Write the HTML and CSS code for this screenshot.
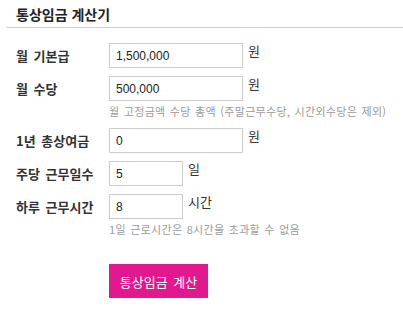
FILE: index.html
```html
<!DOCTYPE html>
<html lang="ko">
<head>
<meta charset="utf-8">
<title>통상임금 계산기</title>
<link rel="stylesheet" href="styles.css">
</head>
<body>
<div class="calc">
  <h1 class="title">통상임금 계산기</h1>
  <form class="form">
    <div class="row">
      <label class="label">월 기본급</label>
      <input class="field wide" type="text" value="1,500,000">
      <span class="unit">원</span>
    </div>
    <div class="row">
      <label class="label">월 수당</label>
      <input class="field wide" type="text" value="500,000">
      <span class="unit">원</span>
    </div>
    <p class="hint">월 고정금액 수당 총액 (주말근무수당, 시간외수당은 제외)</p>
    <div class="row row-sep">
      <label class="label">1년 총상여금</label>
      <input class="field wide" type="text" value="0">
      <span class="unit">원</span>
    </div>
    <div class="row">
      <label class="label">주당 근무일수</label>
      <input class="field short" type="text" value="5">
      <span class="unit">일</span>
    </div>
    <div class="row">
      <label class="label">하루 근무시간</label>
      <input class="field short" type="text" value="8">
      <span class="unit">시간</span>
    </div>
    <p class="hint">1일 근로시간은 8시간을 초과할 수 없음</p>
    <button class="submit" type="button">통상임금 계산</button>
  </form>
</div>
</body>
</html>
```
FILE: styles.css
```css
html, body {
  margin: 0;
  padding: 0;
  background: #ffffff;
}
body {
  font-family: "Noto Sans CJK KR", "Noto Sans", sans-serif;
  color: #333333;
}
.calc {
  padding: 0 0 0 6px;
}
.title {
  margin: 0;
  padding: 4px 0 3px 10px;
  font-size: 14px;
  line-height: 20px;
  font-weight: 700;
  color: #222222;
  border-bottom: 1px solid #cfcfcf;
}
.form {
  margin: 15px 0 0 10px;
}
.row {
  display: flex;
  align-items: flex-start;
  margin-bottom: 8px;
}
.row-sep {
  margin-top: 10px;
}
.label {
  width: 93px;
  flex: none;
  font-size: 13px;
  line-height: 25px;
  font-weight: 700;
  color: #333333;
  word-spacing: 2px;
}
.field {
  box-sizing: border-box;
  height: 25px;
  margin: 0;
  padding: 0 6px;
  border: 1px solid #cccccc;
  border-radius: 0;
  font-family: "Liberation Sans", "Noto Sans CJK KR", sans-serif;
  font-size: 12px;
  color: #222222;
  background: #ffffff;
  outline: none;
}
.wide {
  width: 134px;
}
.short {
  width: 74px;
}
.unit {
  margin-left: 5px;
  font-size: 13px;
  line-height: 16px;
  color: #333333;
}
.hint {
  margin: -5px 0 0 93px;
  font-size: 11px;
  line-height: 14px;
  color: #9a9a9a;
  letter-spacing: 0.3px;
  word-spacing: 1px;
}
.submit {
  display: block;
  margin: 28px 0 0 93px;
  width: 99px;
  height: 34px;
  padding: 0;
  border: none;
  background: #e2198e;
  color: #ffffff;
  font-family: "Noto Sans CJK KR", sans-serif;
  font-size: 13px;
  word-spacing: 2px;
}
```
